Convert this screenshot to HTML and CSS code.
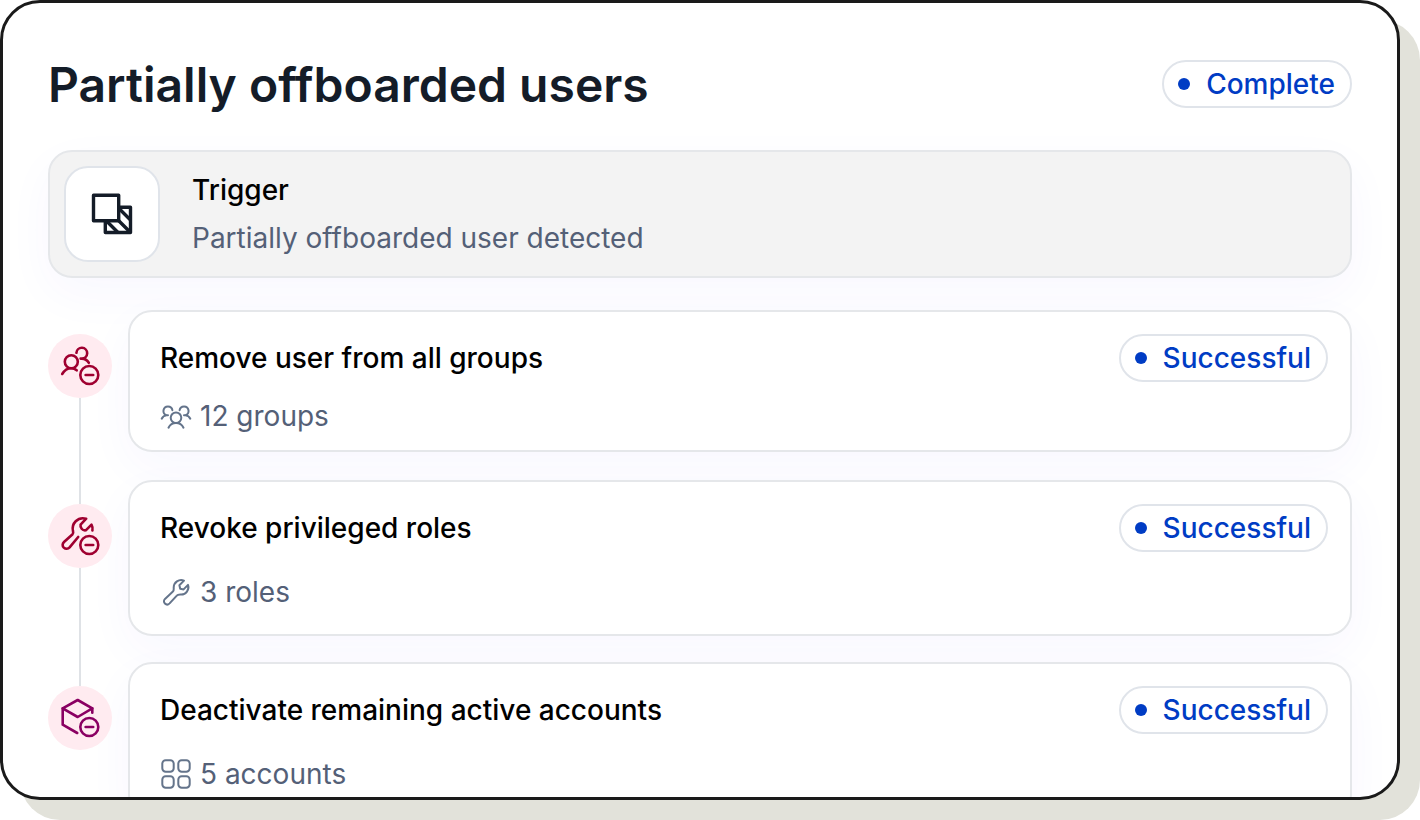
FILE: index.html
```html
<!DOCTYPE html>
<html lang="en">

<head>
    <meta charset="UTF-8">
    <meta name="viewport" content="width=device-width, initial-scale=1.0">
    <title>Partially offboarded users</title>
    <link rel="stylesheet" href="styles.css">
</head>

<body>
    <main class="panel">
        <header class="panel-header">
            <h1>Partially offboarded users</h1>
            <span class="status">Complete</span>
        </header>

        <section class="trigger">
            <div class="trigger-icon">
                <svg width="48" height="48" viewBox="0 0 48 48" fill="none" stroke="currentColor" stroke-width="3.4" stroke-linejoin="round">
                    <path d="M5.5 5.3H30.7V30.7H5.5z" />
                    <path d="M31 17.3H42.5V42.5H17.3V31" />
                    <path d="M31 18.5L42.5 30M30.5 30.5L42.5 42.5M18.5 31L30 42.5" />
                </svg>
            </div>
            <div>
                <h2>Trigger</h2>
                <p>Partially offboarded user detected</p>
            </div>
        </section>

        <ol class="steps">
            <li class="step step-compact">
                <div class="rail">
                    <svg class="rail-icon" viewBox="0 0 64 64">
                        <circle cx="23.3" cy="27.7" r="6.5" />
                        <path d="M14.2 40C16.5 36 19.6 34.2 23.3 34.2C25.3 34.2 27.2 35 28.7 36.3" />
                        <path d="M28.4 18.8A5.4 5.4 0 1 1 33.8 24.6H32.6M33.8 24.6C37 24.8 39.4 26.5 40.8 28.8" />
                        <circle cx="41.3" cy="41" r="9" />
                        <path d="M37.6 41H45.2" />
                    </svg>
                </div>
                <article class="card">
                    <div class="card-header">
                        <h2>Remove user from all groups</h2>
                        <span class="status">Successful</span>
                    </div>
                    <p class="meta">
                        <svg viewBox="0 0 32 32">
                            <circle cx="16" cy="17.7" r="5.3" />
                            <path d="M8.5 27.7C10 24.6 12.8 23 16 23C19.2 23 22 24.6 23.5 27.7" />
                            <path d="M12.4 10.2A4.5 4.5 0 1 0 6.6 15.2C4.3 15.4 2.6 16.8 1.7 18.7M6.6 15.2H8" />
                            <path d="M19.6 10.2A4.5 4.5 0 1 1 25.4 15.2C27.7 15.4 29.4 16.8 30.3 18.7M25.4 15.2H24" />
                        </svg>
                        12 groups
                    </p>
                </article>
            </li>
            <li class="step">
                <div class="rail">
                    <svg class="rail-icon" viewBox="0 0 64 64">
                        <path d="M30.2 33L21.6 43.4C20 45.2 17.5 45.2 15.8 43.6C14.1 41.9 14.3 39.6 16 38L24.6 30.2C25.4 29.4 25.4 28.6 25 27.2C23.2 19.6 29.6 12.4 38.2 14.7L32.6 20.6C32 23.4 34.3 26.9 37.8 26.3L43.5 20.6C44.5 22.3 44.7 24.5 44.4 26.5" />
                        <circle cx="41.3" cy="41" r="9" />
                        <path d="M37.6 41H45.2" />
                    </svg>
                </div>
                <article class="card">
                    <div class="card-header">
                        <h2>Revoke privileged roles</h2>
                        <span class="status">Successful</span>
                    </div>
                    <p class="meta">
                        <svg viewBox="0 0 32 32">
                            <path d="M24 4.6L19.4 9.2L20.2 12.8L23.6 13.4L28 8.9C29.6 13.8 26 18.6 21 18.5C19 18.4 17.8 18.3 16.8 19.6L9.6 27.4C8.2 28.8 6.2 28.8 4.9 27.5C3.6 26.2 3.6 24.3 5 22.9L12.9 15.6C14.1 14.5 13.7 13.2 13.7 11.6C13.8 6.4 18.8 2.7 24 4.6z" />
                        </svg>
                        3 roles
                    </p>
                </article>
            </li>
            <li class="step">
                <div class="rail">
                    <svg class="rail-icon rail-icon-plum" viewBox="0 0 64 64">
                        <path d="M29.7 14L44.3 22.4L29.7 31L14.7 22.4z" />
                        <path d="M14.7 22.4V38.7L29.2 47M44.3 22.4V26.7" />
                        <circle cx="41.3" cy="41" r="9" />
                        <path d="M37.6 41H45.2" />
                    </svg>
                </div>
                <article class="card">
                    <div class="card-header">
                        <h2>Deactivate remaining active accounts</h2>
                        <span class="status">Successful</span>
                    </div>
                    <p class="meta">
                        <svg viewBox="0 0 32 32">
                            <rect x="2.3" y="2.3" width="11.4" height="11.4" rx="3.4" />
                            <rect x="18.3" y="2.3" width="11.4" height="11.4" rx="3.4" />
                            <rect x="2.3" y="18.3" width="11.4" height="11.4" rx="3.4" />
                            <rect x="18.3" y="18.3" width="11.4" height="11.4" rx="3.4" />
                        </svg>
                        5 accounts
                    </p>
                </article>
            </li>
        </ol>
    </main>
</body>

</html>
```
FILE: styles.css
```css
* {
    box-sizing: border-box;
}

body {
    font-family: Inter, "Liberation Sans", sans-serif;
    font-size: 28px;
    line-height: 32px;
    margin: 0;
    height: 100vh;
    padding: 0 20px 20px 0;
    background-color: #ffffff;
    color: #000000;
}

h1,
h2,
p {
    margin: 0;
}

h1 {
    font-size: 48px;
    line-height: 50px;
    font-weight: 600;
    color: #141c28;
}

h2 {
    font-size: 28px;
    line-height: 32px;
    font-weight: 500;
}

.panel {
    height: 100%;
    overflow: hidden;
    padding: 57px 45px 0;
    border: 3px solid #1a1a1a;
    border-radius: 40px;
    background-color: #ffffff;
    box-shadow: 20px 20px 0 #e2e2da;
}

.panel-header {
    display: flex;
    align-items: flex-start;
    justify-content: space-between;
    margin-bottom: 40px;
}

.status {
    display: flex;
    align-items: center;
    gap: 16px;
    height: 48px;
    padding: 0 15px 0 14px;
    border: 2px solid #e0e4ea;
    border-radius: 24px;
    background-color: #ffffff;
    color: #003cc4;
    font-weight: 500;
}

.status::before {
    content: "";
    width: 12px;
    height: 12px;
    border-radius: 50%;
    background-color: currentColor;
}

/* Trigger */
.trigger {
    display: flex;
    align-items: center;
    gap: 32px;
    margin-bottom: 32px;
    padding: 14px;
    border: 2px solid #e5e7ea;
    border-radius: 24px;
    background-color: #f3f3f3;
    box-shadow: 0 16px 48px rgba(80, 60, 255, 0.04);
}

.trigger-icon {
    display: flex;
    align-items: center;
    justify-content: center;
    width: 96px;
    height: 96px;
    border: 2px solid #e0e4ea;
    border-radius: 24px;
    background-color: #ffffff;
    color: #141c28;
}

.trigger h2 {
    margin-bottom: 16px;
}

.trigger p,
.meta {
    color: #546077;
}

/* Steps */
.steps {
    list-style: none;
    margin: 0;
    padding: 0;
}

.step {
    display: flex;
    gap: 16px;
}

.rail {
    display: flex;
    flex-direction: column;
    align-items: center;
}

.rail::before,
.rail::after {
    content: "";
    width: 2px;
    background-color: #dfe2e6;
}

.rail::before {
    height: 24px;
}

.rail::after {
    flex: 1;
}

.step:first-child .rail::before,
.step:last-child .rail::after {
    background-color: transparent;
}

.rail-icon {
    width: 64px;
    height: 64px;
    border-radius: 50%;
    background-color: #ffebf0;
    color: #9f0030;
    z-index: 1;
}

.rail-icon-plum {
    color: #8a0062;
}

.rail-icon,
.meta svg {
    fill: none;
    stroke: currentColor;
    stroke-width: 2.6;
    stroke-linecap: round;
    stroke-linejoin: round;
}

.card {
    flex: 1;
    margin-bottom: 26px;
    padding: 22px 22px 26px 30px;
    border: 2px solid #e5e7ea;
    border-radius: 24px;
    background-color: #ffffff;
    box-shadow: 0 16px 48px rgba(80, 60, 255, 0.04);
}

.card-header {
    display: flex;
    align-items: center;
    justify-content: space-between;
    margin-bottom: 24px;
}

.meta {
    display: flex;
    align-items: center;
    gap: 8px;
}

.meta svg {
    width: 32px;
    height: 32px;
    color: #64748b;
    stroke-width: 2;
}

.step-compact .card {
    margin-bottom: 28px;
    padding-bottom: 18px;
}

.step-compact .card-header {
    margin-bottom: 18px;
}
```
